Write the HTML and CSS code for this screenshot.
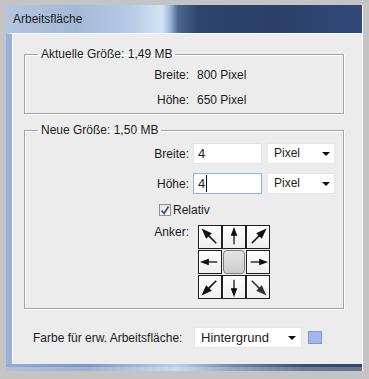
FILE: index.html
```html
<!DOCTYPE html>
<html lang="de">
  <head>
    <meta charset="UTF-8" />
    <meta name="viewport" content="width=device-width, initial-scale=1.0" />
    <title>Arbeitsfläche</title>
    <link rel="stylesheet" href="styles.css">
  </head>

  <body>
    <div class="window">
      <div class="titlebar">Arbeitsfläche</div>
      <div class="client">
        <fieldset class="group current">
          <legend>Aktuelle Größe: 1,49 MB</legend>
          <div class="row info"><span class="label">Breite:</span><span class="value">800 Pixel</span></div>
          <div class="row info"><span class="label">Höhe:</span><span class="value">650 Pixel</span></div>
        </fieldset>

        <fieldset class="group new">
          <legend>Neue Größe: 1,50 MB</legend>
          <div class="row field">
            <span class="label">Breite:</span>
            <div class="input">4</div>
            <div class="select unit">Pixel<i class="arrow"></i></div>
          </div>
          <div class="row field">
            <span class="label">Höhe:</span>
            <div class="input focus">4<span class="caret"></span></div>
            <div class="select unit">Pixel<i class="arrow"></i></div>
          </div>
          <div class="row check">
            <span class="box">
              <svg width="12" height="12" viewBox="0 0 12 12"><path d="M2.5 6.5 L5 9.5 L9.5 2.5" fill="none" stroke="#3c4f86" stroke-width="1.8"/></svg>
            </span>
            <span>Relativ</span>
          </div>
          <div class="row anchor">
            <span class="label">Anker:</span>
            <div class="grid">
              <div class="cell"><svg viewBox="-12 -12 24 24"><g transform="rotate(-45) scale(1.2)"><path d="M0 8 V-3"/><polygon points="0,-9 -2.6,-2 2.6,-2"/></g></svg></div>
              <div class="cell"><svg viewBox="-12 -12 24 24"><g><path d="M0 8 V-3"/><polygon points="0,-9 -2.6,-2 2.6,-2"/></g></svg></div>
              <div class="cell"><svg viewBox="-12 -12 24 24"><g transform="rotate(45) scale(1.2)"><path d="M0 8 V-3"/><polygon points="0,-9 -2.6,-2 2.6,-2"/></g></svg></div>
              <div class="cell"><svg viewBox="-12 -12 24 24"><g transform="rotate(-90)"><path d="M0 8 V-3"/><polygon points="0,-9 -2.6,-2 2.6,-2"/></g></svg></div>
              <div class="cell center"><span class="knob"></span></div>
              <div class="cell"><svg viewBox="-12 -12 24 24"><g transform="rotate(90)"><path d="M0 8 V-3"/><polygon points="0,-9 -2.6,-2 2.6,-2"/></g></svg></div>
              <div class="cell"><svg viewBox="-12 -12 24 24"><g transform="rotate(-135) scale(1.2)"><path d="M0 8 V-3"/><polygon points="0,-9 -2.6,-2 2.6,-2"/></g></svg></div>
              <div class="cell"><svg viewBox="-12 -12 24 24"><g transform="rotate(180)"><path d="M0 8 V-3"/><polygon points="0,-9 -2.6,-2 2.6,-2"/></g></svg></div>
              <div class="cell soft"><svg viewBox="-12 -12 24 24"><g transform="rotate(135) scale(1.2)"><path d="M0 8 V-3"/><polygon points="0,-9 -2.6,-2 2.6,-2"/></g></svg></div>
            </div>
          </div>
        </fieldset>

        <div class="row fill">
          <span class="fill-label">Farbe für erw. Arbeitsfläche:</span>
          <div class="select wide">Hintergrund<i class="arrow"></i></div>
          <span class="swatch"></span>
        </div>
      </div>
      <div class="frame-bottom"></div>
    </div>
  </body>
</html>
```

FILE: styles.css
```css
body {
  margin: 0;
  padding: 5px 0 0 6px;
  background: #c4c4c4;
  font-family: "Liberation Sans", Arial, sans-serif;
  font-size: 12px;
  color: #1b1b1b;
}

.window {
  width: 356px;
  border-right: 1px solid #fff;
}

.titlebar {
  height: 28px;
  line-height: 29px;
  padding-left: 7px;
  color: #1e1e1e;
  background: linear-gradient(to right, #b3c5df 0, #a4b9d7 70px, #b6cbe6 125px, #d2e5f6 156px, #9fb6d6 164px, #4d6791 172px, #2d446f 192px, #2a4069 270px, #31497a 100%);
}

.client {
  border-top: 1px solid #fff;
  border-left: 6px solid #9ab2d8;
  box-shadow: inset 1px 0 0 #fff;
  background: #ececec;
  padding: 13px 0 16px;
}

.group {
  margin: 0 0 0 12px;
  width: 320px;
  box-sizing: border-box;
  padding: 1px 0;
  border: 1px solid #a3a3a3;
  box-shadow: inset 1px 1px 0 #fff, 1px 1px 0 #fff;
  min-width: 0;
}

.group legend {
  margin-left: 13px;
  padding: 0 3px;
  line-height: 14px;
}

.group.new {
  margin-top: 9px;
  padding: 6px 0 9px;
}

.row {
  display: flex;
  align-items: center;
}

.label {
  width: 164px;
  text-align: right;
  flex: none;
}

.row.info {
  height: 25px;
}

.row.info .value {
  margin-left: 8px;
}

.row.field {
  height: 21px;
}

.row.field + .row.field {
  margin-top: 9px;
}

.input {
  margin-left: 4px;
  width: 69px;
  height: 21px;
  box-sizing: border-box;
  border: 1px solid #e2e2e2;
  background: #fff;
  padding-left: 4px;
  font-size: 13px;
  line-height: 19px;
  display: flex;
  align-items: center;
}

.input.focus {
  border-color: #8db6e2;
}

.caret {
  display: inline-block;
  width: 1px;
  height: 17px;
  margin-left: 1px;
  background: #000;
}

.select {
  position: relative;
  height: 21px;
  box-sizing: border-box;
  border: 1px solid #e6e6e6;
  background: #fff;
  padding-left: 6px;
  line-height: 19px;
}

.select.unit {
  margin-left: 5px;
  width: 68px;
}

.select .arrow {
  position: absolute;
  right: 4px;
  top: 8px;
  width: 0;
  height: 0;
  border-left: 4px solid transparent;
  border-right: 4px solid transparent;
  border-top: 4px solid #111;
}

.row.check {
  margin-top: 9px;
  height: 13px;
  padding-left: 134px;
}

.box {
  width: 12px;
  height: 12px;
  box-sizing: border-box;
  border: 1px solid #8f8f8f;
  background: linear-gradient(#e6e6e6, #fafafa);
  margin-right: 2px;
  display: flex;
}

.box svg {
  margin: -1px;
}

.row.anchor {
  margin-top: 9px;
  align-items: flex-start;
}

.row.anchor .label {
  line-height: 14px;
}

.grid {
  margin-left: 9px;
  display: grid;
  grid-template-columns: repeat(3, 24px);
  grid-template-rows: repeat(3, 24px);
  row-gap: 1px;
}

.cell {
  box-sizing: border-box;
  border: 1px solid #1e1e1e;
  background: linear-gradient(#fdfdfd, #f0f0f0);
  box-shadow: inset 1px 1px 0 #fff;
}

.cell svg {
  display: block;
  width: 22px;
  height: 22px;
  stroke: #111;
  stroke-width: 1.4;
  fill: #111;
}

.cell.soft svg {
  stroke: #333;
  fill: #333;
}

.cell.center {
  border: none;
  background: none;
  box-shadow: none;
  display: flex;
}

.knob {
  flex: 1;
  margin: 0 1px;
  border: 1px solid #7d7d7d;
  border-radius: 4px;
  background: linear-gradient(#e4e4e4, #cdcdcd);
}

.row.fill {
  margin-top: 18px;
  padding-left: 21px;
  height: 21px;
}

.fill-label {
  width: 161px;
}

.select.wide {
  width: 108px;
  padding-left: 6px;
  font-size: 13px;
}

.select.wide .arrow {
  right: 5px;
}

.swatch {
  margin-left: 6px;
  width: 14px;
  height: 13px;
  box-sizing: border-box;
  border: 1px solid #8797c8;
  background: #a3b6ea;
}

.frame-bottom {
  height: 7px;
  background: linear-gradient(to bottom, transparent 0, transparent 3px, rgba(255, 255, 255, 0.25) 3px),
    linear-gradient(to right, #93acd4 0, #7d97c4 80px, #b9cfeb 170px, #6f86ad 230px, #3a4d72 300px, #33466c 100%);
}
```
